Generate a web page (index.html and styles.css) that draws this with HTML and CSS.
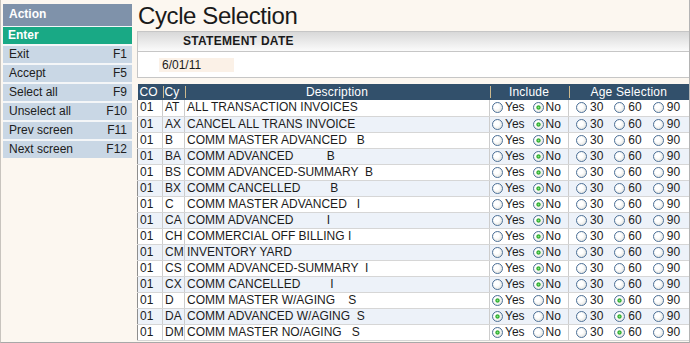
FILE: index.html
```html
<!DOCTYPE html>
<html>
<head>
<meta charset="utf-8">
<title>Cycle Selection</title>
<link rel="stylesheet" href="styles.css">
</head>
<body>
<div class="app">
  <div class="side">
    <div class="side-head">Action</div>
    <div class="enter">Enter</div>
    <div class="menu">
      <div class="item"><span>Exit</span><span>F1</span></div>
      <div class="item"><span>Accept</span><span>F5</span></div>
      <div class="item"><span>Select all</span><span>F9</span></div>
      <div class="item"><span>Unselect all</span><span>F10</span></div>
      <div class="item"><span>Prev screen</span><span>F11</span></div>
      <div class="item"><span>Next screen</span><span>F12</span></div>
    </div>
  </div>
  <div class="main">
    <div class="title">Cycle Selection</div>
    <div class="stmt">
      <div class="stmt-head">STATEMENT DATE</div>
      <div class="stmt-body"><div class="date">6/01/11</div></div>
    </div>
    <table class="grid">
      <colgroup><col class="c1"><col class="c2"><col class="c3"><col class="c4"><col class="c5"></colgroup>
      <thead>
        <tr><th class="l">CO</th><th class="l">Cy</th><th>Description</th><th>Include</th><th>Age Selection</th></tr>
      </thead>
      <tbody>
        <tr><td>01</td><td>AT</td><td class="d">ALL TRANSACTION INVOICES</td><td class="inc"><span class="rb"></span><span class="ly">Yes</span><span class="rb on"></span><span>No</span></td><td class="age"><span class="rb"></span><span class="la">30</span><span class="rb"></span><span class="la">60</span><span class="rb"></span><span>90</span></td></tr>
        <tr><td>01</td><td>AX</td><td class="d">CANCEL ALL TRANS INVOICE</td><td class="inc"><span class="rb"></span><span class="ly">Yes</span><span class="rb on"></span><span>No</span></td><td class="age"><span class="rb"></span><span class="la">30</span><span class="rb"></span><span class="la">60</span><span class="rb"></span><span>90</span></td></tr>
        <tr><td>01</td><td>B</td><td class="d">COMM MASTER ADVANCED   B</td><td class="inc"><span class="rb"></span><span class="ly">Yes</span><span class="rb on"></span><span>No</span></td><td class="age"><span class="rb"></span><span class="la">30</span><span class="rb"></span><span class="la">60</span><span class="rb"></span><span>90</span></td></tr>
        <tr><td>01</td><td>BA</td><td class="d">COMM ADVANCED          B</td><td class="inc"><span class="rb"></span><span class="ly">Yes</span><span class="rb on"></span><span>No</span></td><td class="age"><span class="rb"></span><span class="la">30</span><span class="rb"></span><span class="la">60</span><span class="rb"></span><span>90</span></td></tr>
        <tr><td>01</td><td>BS</td><td class="d">COMM ADVANCED-SUMMARY  B</td><td class="inc"><span class="rb"></span><span class="ly">Yes</span><span class="rb on"></span><span>No</span></td><td class="age"><span class="rb"></span><span class="la">30</span><span class="rb"></span><span class="la">60</span><span class="rb"></span><span>90</span></td></tr>
        <tr><td>01</td><td>BX</td><td class="d">COMM CANCELLED         B</td><td class="inc"><span class="rb"></span><span class="ly">Yes</span><span class="rb on"></span><span>No</span></td><td class="age"><span class="rb"></span><span class="la">30</span><span class="rb"></span><span class="la">60</span><span class="rb"></span><span>90</span></td></tr>
        <tr><td>01</td><td>C</td><td class="d">COMM MASTER ADVANCED   I</td><td class="inc"><span class="rb"></span><span class="ly">Yes</span><span class="rb on"></span><span>No</span></td><td class="age"><span class="rb"></span><span class="la">30</span><span class="rb"></span><span class="la">60</span><span class="rb"></span><span>90</span></td></tr>
        <tr><td>01</td><td>CA</td><td class="d">COMM ADVANCED          I</td><td class="inc"><span class="rb"></span><span class="ly">Yes</span><span class="rb on"></span><span>No</span></td><td class="age"><span class="rb"></span><span class="la">30</span><span class="rb"></span><span class="la">60</span><span class="rb"></span><span>90</span></td></tr>
        <tr><td>01</td><td>CH</td><td class="d">COMMERCIAL OFF BILLING I</td><td class="inc"><span class="rb"></span><span class="ly">Yes</span><span class="rb on"></span><span>No</span></td><td class="age"><span class="rb"></span><span class="la">30</span><span class="rb"></span><span class="la">60</span><span class="rb"></span><span>90</span></td></tr>
        <tr><td>01</td><td>CM</td><td class="d">INVENTORY YARD</td><td class="inc"><span class="rb"></span><span class="ly">Yes</span><span class="rb on"></span><span>No</span></td><td class="age"><span class="rb"></span><span class="la">30</span><span class="rb"></span><span class="la">60</span><span class="rb"></span><span>90</span></td></tr>
        <tr><td>01</td><td>CS</td><td class="d">COMM ADVANCED-SUMMARY  I</td><td class="inc"><span class="rb"></span><span class="ly">Yes</span><span class="rb on"></span><span>No</span></td><td class="age"><span class="rb"></span><span class="la">30</span><span class="rb"></span><span class="la">60</span><span class="rb"></span><span>90</span></td></tr>
        <tr><td>01</td><td>CX</td><td class="d">COMM CANCELLED         I</td><td class="inc"><span class="rb"></span><span class="ly">Yes</span><span class="rb on"></span><span>No</span></td><td class="age"><span class="rb"></span><span class="la">30</span><span class="rb"></span><span class="la">60</span><span class="rb"></span><span>90</span></td></tr>
        <tr><td>01</td><td>D</td><td class="d">COMM MASTER W/AGING    S</td><td class="inc"><span class="rb on"></span><span class="ly">Yes</span><span class="rb"></span><span>No</span></td><td class="age"><span class="rb"></span><span class="la">30</span><span class="rb on"></span><span class="la">60</span><span class="rb"></span><span>90</span></td></tr>
        <tr><td>01</td><td>DA</td><td class="d">COMM ADVANCED W/AGING  S</td><td class="inc"><span class="rb on"></span><span class="ly">Yes</span><span class="rb"></span><span>No</span></td><td class="age"><span class="rb"></span><span class="la">30</span><span class="rb on"></span><span class="la">60</span><span class="rb"></span><span>90</span></td></tr>
        <tr><td>01</td><td>DM</td><td class="d">COMM MASTER NO/AGING   S</td><td class="inc"><span class="rb on"></span><span class="ly">Yes</span><span class="rb"></span><span>No</span></td><td class="age"><span class="rb"></span><span class="la">30</span><span class="rb on"></span><span class="la">60</span><span class="rb"></span><span>90</span></td></tr>
      </tbody>
    </table>
  </div>
</div>
</body>
</html>
```
FILE: styles.css
```css
* { box-sizing: border-box; }
html, body { margin: 0; padding: 0; }
body {
  font-family: "Liberation Sans", Arial, sans-serif;
  font-size: 12px;
  color: #1c1c1c;
  background: #fcf7f0;
}
.app {
  width: 690px;
  height: 343px;
  display: flex;
  background: #fcf7f0;
  border-left: 1px solid #c8c4be;
  border-right: 1px solid #b4b4b4;
  border-bottom: 1px solid #a8a8a8;
  overflow: hidden;
}
.side {
  width: 129px;
  flex: none;
  margin: 4px 0 0 2px;
  align-self: flex-start;
  display: flex;
  flex-direction: column;
  background: #f4f6f8;
}
.side-head {
  height: 22px;
  background: #7f92aa;
  color: #fff;
  font-weight: bold;
  line-height: 21px;
  padding-left: 6px;
}
.enter {
  height: 17px;
  margin-top: 1px;
  background: #19a985;
  color: #fff;
  font-weight: bold;
  line-height: 17px;
  padding-left: 5px;
}
.menu {
  display: flex;
  flex-direction: column;
  gap: 2px;
  padding-top: 2px;
}
.item {
  height: 17px;
  background: #c9d7e5;
  display: flex;
  justify-content: space-between;
  line-height: 17px;
  padding: 0 5px 0 6px;
  color: #202020;
}
.main {
  flex: 1;
  min-width: 0;
  margin-left: 5px;
  display: flex;
  flex-direction: column;
}
.title {
  height: 31px;
  padding: 2px 0 0 1px;
  font-size: 24px;
  line-height: 28px;
  letter-spacing: -0.4px;
  color: #1a1a1a;
}
.stmt {
  border: 1px solid #c6c6c6;
  border-right: none;
}
.stmt-head {
  height: 20px;
  border-bottom: 1px solid #c6c6c6;
  background: linear-gradient(#d8d8d8, #fbfbfb);
  font-weight: bold;
  line-height: 19px;
  padding-left: 45px;
  letter-spacing: 0.3px;
  color: #1a1a1a;
}
.stmt-body {
  height: 25px;
  background: #fff;
  padding: 6px 0 0 21px;
}
.date {
  width: 75px;
  height: 14px;
  background: #fbf1e7;
  line-height: 14px;
  padding-left: 3px;
}
.grid {
  margin-top: 6px;
  width: 100%;
  border-collapse: collapse;
  table-layout: fixed;
}
.c1 { width: 25px; }
.c2 { width: 22px; }
.c3 { width: 305px; }
.c4 { width: 79px; }
.grid th {
  height: 16px;
  padding: 0 2px;
  background-color: #32506b;
  color: #fff;
  font-weight: normal;
  line-height: 16px;
  text-align: center;
  letter-spacing: 0.2px;
}
.grid th.l { text-align: left; }
.grid th + th {
  background-image: linear-gradient(#cdb98d, #cdb98d);
  background-size: 1px 12px;
  background-position: left center;
  background-repeat: no-repeat;
}
.grid td {
  height: 16px;
  padding: 0 2px;
  line-height: 15px;
  border-bottom: 1px solid #d6d6d6;
  border-left: 1px solid #cdcdcd;
  white-space: nowrap;
  overflow: hidden;
  background: #fff;
}
.grid td:first-child { border-left: 1px solid #8e8e8e; }
.grid tbody tr:nth-child(even) td { background: #edf2f9; }
.grid td.d { white-space: pre; }
.grid td.inc { padding-left: 2px; }
.grid td.age { padding-left: 7px; }
.rb {
  display: inline-block;
  width: 11px;
  height: 11px;
  border: 1px solid #4d7199;
  border-radius: 50%;
  vertical-align: -2px;
  margin-right: 2px;
  background: radial-gradient(circle at 40% 40%, #ffffff 30%, #d9d9d2 100%);
}
.rb.on {
  background:
    radial-gradient(circle, #8ae48a 0, #25a825 1.6px, rgba(37,168,37,0) 2.6px),
    radial-gradient(circle at 40% 40%, #ffffff 30%, #d9d9d2 100%);
}
.age .rb { margin-right: 3px; }
.ly { margin-right: 8px; }
.la { margin-right: 11px; }
```
